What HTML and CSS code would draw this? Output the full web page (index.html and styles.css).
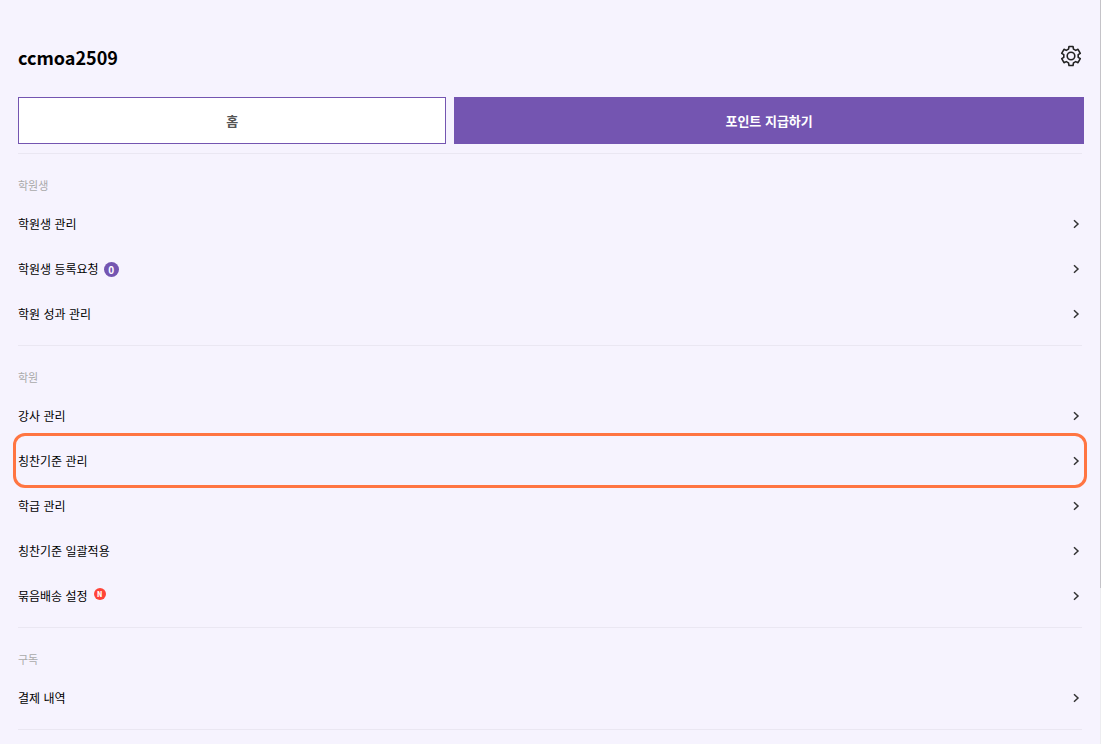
FILE: index.html
```html
<!DOCTYPE html>
<html lang="ko">
<head>
    <meta charset="UTF-8">
    <meta name="viewport" content="width=device-width, initial-scale=1.0">
    <title>학원 관리</title>
    <link rel="stylesheet" href="styles.css">
</head>
<body>
    <svg class="defs" aria-hidden="true">
        <symbol id="chevron" viewBox="0 0 8 10">
            <path d="M2 1.2L6 5L2 8.8" fill="none" stroke="currentColor" stroke-width="1.5"/>
        </symbol>
    </svg>

    <main class="page">
        <header class="header">
            <h1>ccmoa2509</h1>
            <button class="settings-btn" type="button" aria-label="설정">
                <svg viewBox="0 0 22 22" width="22" height="22" fill="none" stroke="currentColor" stroke-width="1.6" stroke-linejoin="round">
                    <path d="M9 1.500H13L13.500 4.100L15.700 5.400L18 4.300L20.300 8.300L18.200 9.700V12.300L20.300 13.700L18 17.700L15.700 16.600L13.500 17.900L13 20.500H9L8.500 17.900L6.300 16.600L4 17.700L1.700 13.700L3.800 12.300V9.700L1.700 8.300L4 4.300L6.300 5.400L8.500 4.100Z"/>
                    <circle cx="11" cy="11" r="3.8"/>
                </svg>
            </button>
        </header>

        <div class="actions">
            <button class="btn btn-home" type="button">홈</button>
            <button class="btn btn-point" type="button">포인트 지급하기</button>
        </div>

        <nav class="menu">
            <section class="menu-section">
                <h2>학원생</h2>
                <ul>
                    <li><a href="#"><span>학원생 관리</span><svg class="chevron"><use href="#chevron"/></svg></a></li>
                    <li><a href="#"><span>학원생 등록요청</span><span class="count">0</span><svg class="chevron"><use href="#chevron"/></svg></a></li>
                    <li><a href="#"><span>학원 성과 관리</span><svg class="chevron"><use href="#chevron"/></svg></a></li>
                </ul>
            </section>

            <section class="menu-section">
                <h2>학원</h2>
                <ul>
                    <li><a href="#"><span>강사 관리</span><svg class="chevron"><use href="#chevron"/></svg></a></li>
                    <li><a href="#" class="highlight"><span>칭찬기준 관리</span><svg class="chevron"><use href="#chevron"/></svg></a></li>
                    <li><a href="#"><span>학급 관리</span><svg class="chevron"><use href="#chevron"/></svg></a></li>
                    <li><a href="#"><span>칭찬기준 일괄적용</span><svg class="chevron"><use href="#chevron"/></svg></a></li>
                    <li><a href="#"><span>묶음배송 설정</span><span class="new">N</span><svg class="chevron"><use href="#chevron"/></svg></a></li>
                </ul>
            </section>

            <section class="menu-section">
                <h2>구독</h2>
                <ul>
                    <li><a href="#"><span>결제 내역</span><svg class="chevron"><use href="#chevron"/></svg></a></li>
                </ul>
            </section>

            <hr>
        </nav>
    </main>

    <div class="scroll-track"><div class="scroll-thumb"></div></div>
</body>
</html>
```
FILE: styles.css
```css
* {
    box-sizing: border-box;
}
body {
    margin: 0;
    background-color: #f6f3fe;
    color: #000;
    font-family: "Noto Sans CJK KR", "Noto Sans", sans-serif;
    font-size: 12px;
}
.defs {
    display: none;
}
.page {
    padding: 40px 17px 0 18px;
}
.header {
    display: flex;
    justify-content: space-between;
    align-items: flex-start;
    height: 57px;
}
h1 {
    margin: 0;
    font-size: 18px;
    font-weight: 700;
    line-height: 34px;
    color: #000;
}
.settings-btn {
    display: flex;
    margin: 0;
    padding: 5px 2px;
    border: none;
    background: none;
    color: #222;
    cursor: pointer;
}
.actions {
    display: grid;
    grid-template-columns: 17fr 25fr;
    gap: 8px;
}
.btn {
    height: 47px;
    padding: 0;
    border: 1px solid #7455b1;
    font-family: inherit;
    font-size: 13px;
    font-weight: 700;
    cursor: pointer;
}
.btn-home {
    background-color: #fff;
    color: #555;
}
.btn-point {
    background-color: #7455b1;
    color: #fff;
}
.menu {
    margin: 9px 2px 0 0;
}
.menu-section {
    padding: 22px 0 9px;
    border-top: 1px solid #eae7f2;
}
.menu-section h2 {
    margin: 0 0 7px;
    font-size: 11px;
    font-weight: 400;
    line-height: 18px;
    color: #aaa;
}
.menu-section ul {
    margin: 0;
    padding: 0;
    list-style: none;
}
.menu-section a {
    position: relative;
    display: flex;
    align-items: center;
    height: 45px;
    padding-right: 2px;
    color: inherit;
    text-decoration: none;
}
.chevron {
    width: 8px;
    height: 10px;
    margin-left: auto;
    color: #333;
}
.count {
    width: 15px;
    height: 15px;
    margin: 2px 0 0 5px;
    border-radius: 50%;
    background-color: #7455b1;
    color: #fff;
    font-size: 10px;
    font-weight: 700;
    line-height: 15px;
    text-align: center;
}
.new {
    width: 12px;
    height: 12px;
    margin: 0 0 4px 6px;
    border-radius: 50%;
    background-color: #ff4438;
    color: #fff;
    font-size: 7px;
    font-weight: 900;
    line-height: 12px;
    text-align: center;
}
/* outline drawn around the selected row */
.highlight::after {
    content: "";
    position: absolute;
    inset: -5px;
    border: 3px solid #ff7542;
    border-radius: 12px;
    pointer-events: none;
}
hr {
    margin: 0;
    border: none;
    border-top: 1px solid #eae7f2;
}
.scroll-track {
    position: fixed;
    top: 0;
    right: 0;
    bottom: 0;
    width: 1px;
    background-color: #ececf0;
}
.scroll-thumb {
    height: 79%;
    background-color: #c4c3c8;
}
```
